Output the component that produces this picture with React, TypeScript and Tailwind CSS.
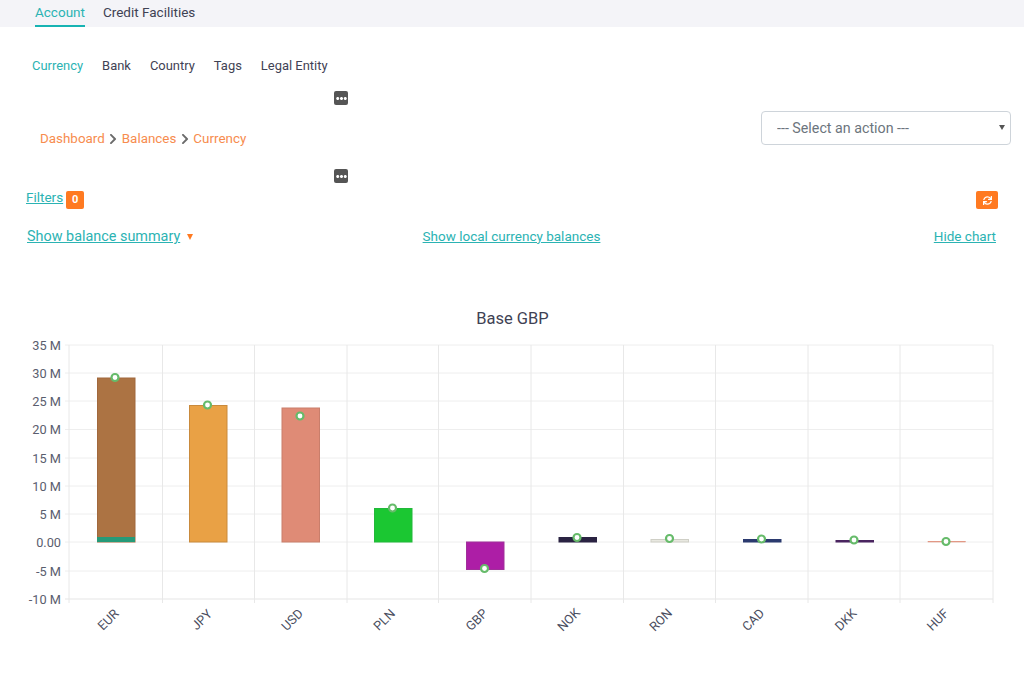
import React from 'react';
import { FaChevronRight, FaEllipsisH, FaSync } from 'react-icons/fa';

const font = { fontFamily: 'Roboto, sans-serif' };

const yTicks = [
  ['35 M', 345],
  ['30 M', 373],
  ['25 M', 401],
  ['20 M', 429.5],
  ['15 M', 458],
  ['10 M', 486],
  ['5 M', 514],
  ['0.00', 542],
  ['-5 M', 571],
  ['-10 M', 599],
] as const;

const xLines = [69, 162.5, 254.5, 347, 438.5, 531, 623.5, 715.5, 808, 900, 993];

const bars = [
  { name: 'EUR', x: 97.5, y: 378, h: 164, fill: '#ac7343', stroke: '#a1683c', px: 115, py: 377.5, lx: 108.5 },
  { name: 'JPY', x: 189.5, y: 405.5, h: 136.5, fill: '#e9a145', stroke: '#c98a3c', px: 207.5, py: 405, lx: 202 },
  { name: 'USD', x: 282, y: 408, h: 134, fill: '#df8b76', stroke: '#c97e6b', px: 300, py: 416, lx: 292.5 },
  { name: 'PLN', x: 374.5, y: 508.5, h: 33.5, fill: '#1bc732', stroke: '#22b83a', px: 392.5, py: 508, lx: 384.5 },
  { name: 'GBP', x: 466.5, y: 542, h: 27.5, fill: '#ad1ea6', stroke: '#a0309a', px: 484.5, py: 568.5, lx: 477 },
  { name: 'NOK', x: 559, y: 537.5, h: 4.5, fill: '#2a2342', stroke: '#2a2342', px: 577, py: 537.5, lx: 569 },
  { name: 'RON', x: 651, y: 539.5, h: 2.5, fill: '#e8e8e0', stroke: '#cfcfc6', px: 669.5, py: 538.5, lx: 661 },
  { name: 'CAD', x: 743.5, y: 539.5, h: 2.5, fill: '#2b3a6f', stroke: '#2b3a6f', px: 761.5, py: 539, lx: 753.5 },
  { name: 'DKK', x: 836, y: 540.5, h: 1.5, fill: '#4a2560', stroke: '#4a2560', px: 854, py: 540, lx: 846 },
  { name: 'HUF', x: 928, y: 541.5, h: 0.5, fill: '#df8b76', stroke: '#df8b76', px: 946, py: 541.5, lx: 938 },
];

function DotsButton() {
  return (
    <div className="flex h-[14px] w-[14px] items-center justify-center rounded-[2px] bg-[#555555] text-white">
      <FaEllipsisH size={11} />
    </div>
  );
}

function BalanceChart() {
  return (
    <svg className="mt-[56px] block" width={1024} height={384} viewBox="0 300 1024 384" style={font}>
      <text x={512.5} y={324} textAnchor="middle" fontSize={16.5} fill="#3f4254">Base GBP</text>
      {yTicks.map(([label, y]) => (
        <g key={label}>
          <line x1={65} x2={993} y1={y} y2={y} stroke="#eeeeee" strokeWidth={y === 599 ? 1.5 : 1} />
          <text x={61} y={y + 4.5} textAnchor="end" fontSize={12.75} fill="#5a5d6e">{label}</text>
        </g>
      ))}
      {xLines.map((x) => (
        <line key={x} x1={x} x2={x} y1={345} y2={603} stroke="#e8e8e8" />
      ))}
      {bars.map((b) => (
        <rect key={b.name} x={b.x} y={b.y} width={37.5} height={b.h} fill={b.fill} stroke={b.stroke} strokeWidth={b.h < 1 ? 0.5 : 1} />
      ))}
      <rect x={97} y={537} width={38} height={5} fill="#259a78" />
      {bars.map((b) => (
        <circle key={b.name} cx={b.px} cy={b.py} r={3.5} fill="#ffffff" stroke="#66bb6a" strokeWidth={2.2} />
      ))}
      {bars.map((b) => (
        <text
          key={b.name}
          x={b.lx}
          y={624}
          textAnchor="middle"
          fontSize={12.75}
          fill="#4a4d5e"
          transform={`rotate(-45 ${b.lx} 620)`}
        >
          {b.name}
        </text>
      ))}
    </svg>
  );
}

export default function App() {
  return (
    <div className="h-[684px] w-[1024px] overflow-hidden bg-white" style={font}>
      <div className="flex h-[27px] gap-[18px] bg-[#f4f4f8] pl-[35px] text-[13.5px] leading-[25px]">
        <a className="h-[27px] border-b-2 border-[#17b3b3] text-[#2bb3b3]">Account</a>
        <a className="text-[#3f4254]">Credit Facilities</a>
      </div>

      <div className="mt-[29px] flex h-5 items-center gap-[19px] pl-[32px] text-[12.95px] text-[#3f4254]">
        <a className="text-[#2bb3b3]">Currency</a>
        <a>Bank</a>
        <a>Country</a>
        <a>Tags</a>
        <a>Legal Entity</a>
      </div>

      <div className="mt-[15px] pl-[334px]">
        <DotsButton />
      </div>

      <div className="mt-[6px] flex h-[34px] items-center justify-between pl-[40px] pr-[13px]">
        <div className="mt-[22px] flex items-center gap-[2.5px] text-[13.4px] text-[#f78c4e]">
          <span>Dashboard</span>
          <FaChevronRight size={12} className="text-[#6b6b6b]" />
          <span>Balances</span>
          <FaChevronRight size={12} className="text-[#6b6b6b]" />
          <span>Currency</span>
        </div>
        <div className="relative">
          <select className="h-[34px] w-[250px] appearance-none rounded-[4px] border border-[#ced4da] bg-white pl-[15px] pt-[2px] text-[14.25px] text-[#6c757d]">
            <option>--- Select an action ---</option>
          </select>
          <span className="absolute right-[6px] top-[14px] h-0 w-0 border-x-[3px] border-t-[5px] border-x-transparent border-t-[#555555]" />
        </div>
      </div>

      <div className="mt-[24px] pl-[334px]">
        <DotsButton />
      </div>

      <div className="mt-[8px] flex h-[18px] items-center justify-between pl-[26px] pr-[26px]">
        <div className="flex items-center gap-[3px]">
          <a className="mb-[6px] text-[13.5px] text-[#2bb3b3] underline">Filters</a>
          <span className="flex h-[18px] w-[18px] items-center justify-center rounded-[2px] bg-[#ff7a21] text-[11px] font-bold text-white">0</span>
        </div>
        <button className="flex h-[18px] w-[22px] items-center justify-center rounded-[2px] bg-[#ff7a21] text-white">
          <FaSync size={9} />
        </button>
      </div>

      <div className="mt-[15px] grid h-5 grid-cols-3 items-center pl-[27px] pr-[28px] text-[13.5px] text-[#2bb3b3]">
        <div className="mt-[2px] flex items-center gap-[7px]">
          <a className="text-[14.4px] underline">Show balance summary</a>
          <span className="h-0 w-0 border-x-[3.5px] border-t-[6px] border-x-transparent border-t-[#ff7a21]" />
        </div>
        <a className="justify-self-center underline">Show local currency balances</a>
        <a className="justify-self-end underline">Hide chart</a>
      </div>

      <BalanceChart />
    </div>
  );
}
